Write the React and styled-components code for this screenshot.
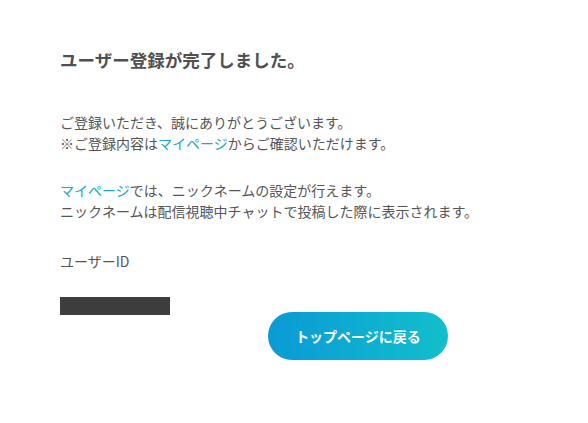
import React from "react";
import styled, { createGlobalStyle } from "styled-components";

const Global = createGlobalStyle`
  html, body { margin: 0; padding: 0; background: #fff; }
  body { font-family: "Noto Sans CJK JP", "Noto Sans", sans-serif; color: #555; }
`;

const Page = styled.main`
  padding: 48px 60px 0 60px;
`;

const Title = styled.h1`
  margin: 0;
  font-size: 17.5px;
  line-height: 24px;
  font-weight: 700;
  color: #505050;
`;

const Paragraph = styled.p`
  margin: ${(p) => p.$top}px 0 0;
  font-size: 14px;
  line-height: 21px;
  color: #555;
`;

const Link = styled.a`
  color: #1ba8c5;
  text-decoration: none;
`;

const IdBox = styled.div`
  margin-top: 25px;
  width: 110px;
  height: 18px;
  background: #3d3d3d;
`;

const ButtonRow = styled.div`
  margin-top: -3px;
  padding-left: 208px;
`;

const PrimaryButton = styled.button`
  width: 180px;
  height: 48px;
  border: none;
  border-radius: 24px;
  background: linear-gradient(90deg, #0a9ad6 0%, #12bfcb 100%);
  color: #fff;
  font-family: "Noto Sans CJK JP", sans-serif;
  font-size: 14px;
  font-weight: 700;
  cursor: pointer;
`;

export default function App() {
  return (
    <>
      <Global />
      <Page>
        <Title>ユーザー登録が完了しました。</Title>
        <Paragraph $top={40}>
          ご登録いただき、誠にありがとうございます。
          <br />
          ※ご登録内容は<Link href="#">マイページ</Link>からご確認いただけます。
        </Paragraph>
        <Paragraph $top={26}>
          <Link href="#">マイページ</Link>では、ニックネームの設定が行えます。
          <br />
          ニックネームは配信視聴中チャットで投稿した際に表示されます。
        </Paragraph>
        <Paragraph $top={29}>ユーザーID</Paragraph>
        <IdBox />
        <ButtonRow>
          <PrimaryButton>トップページに戻る</PrimaryButton>
        </ButtonRow>
      </Page>
    </>
  );
}
